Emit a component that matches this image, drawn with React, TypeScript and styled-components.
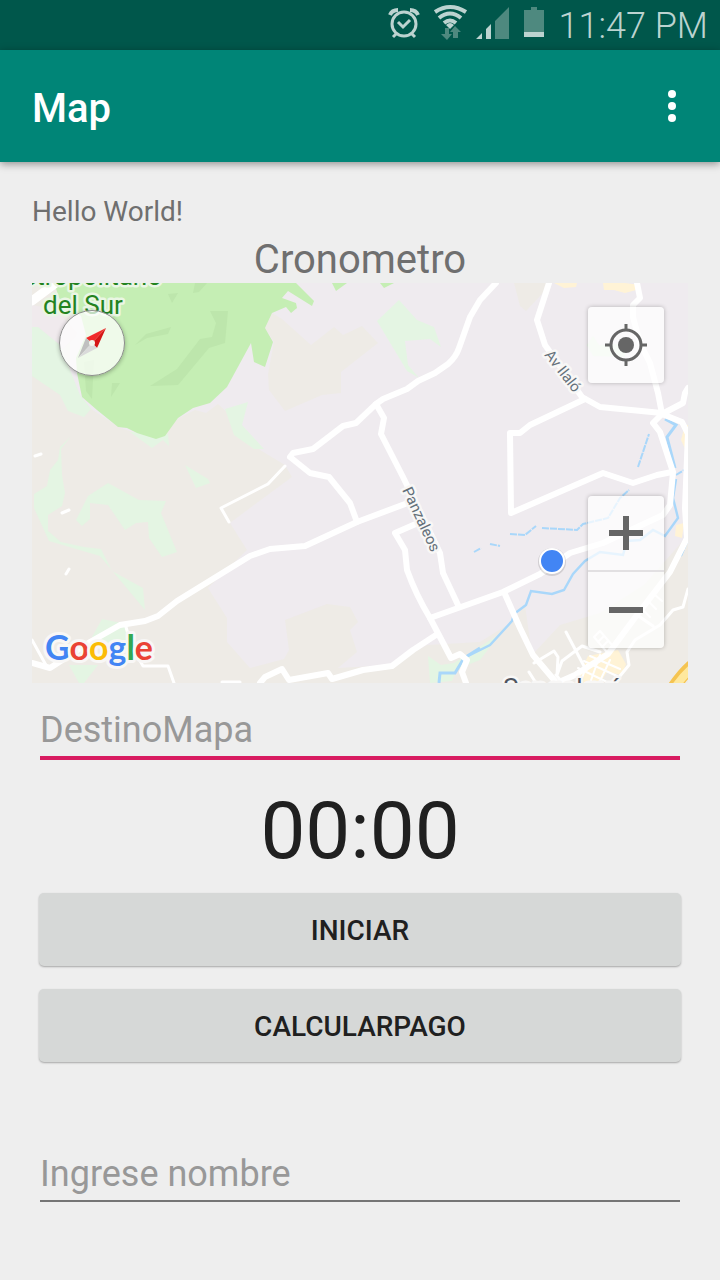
import React from "react";
import styled, { createGlobalStyle } from "styled-components";

const GlobalStyle = createGlobalStyle`
  * { box-sizing: border-box; }
  body {
    margin: 0;
    background: #eeeeee;
    font-family: Roboto, "Liberation Sans", sans-serif;
  }
  button, input { font-family: inherit; }
`;

const Screen = styled.div`
  display: flex;
  flex-direction: column;
  min-height: 100vh;
  background: #eeeeee;
`;

const StatusBar = styled.div`
  display: flex;
  align-items: center;
  justify-content: flex-end;
  height: 50px;
  padding-right: 12px;
  background: #00574b;
  color: #bcd3d0;
`;

const StatusIcons = styled.svg`
  width: 160px;
  height: 50px;
  margin-right: 11px;
`;

const Clock = styled.time`
  padding-top: 2px;
  font-size: 36px;
  font-weight: 300;
  line-height: 48px;
`;

const AppBar = styled.header`
  display: flex;
  align-items: center;
  justify-content: space-between;
  height: 112px;
  padding: 4px 32px 0;
  background: #008577;
  box-shadow: 0 2px 8px rgba(0, 0, 0, 0.4);
`;

const Title = styled.h1`
  margin: 0;
  color: #ffffff;
  font-size: 40px;
  font-weight: 500;
  line-height: 50px;
  padding-top: 2px;
`;

const MenuButton = styled.button`
  display: flex;
  padding: 0 12px 4px;
  border: 0;
  background: none;
`;

const Content = styled.main`
  display: flex;
  flex-direction: column;
  padding: 32px;
`;

const Greeting = styled.p`
  margin: 0 0 6px;
  color: #6f6f6f;
  font-size: 28px;
  line-height: 36px;
`;

const Heading = styled.h2`
  margin: 0;
  color: #6f6f6f;
  font-size: 40px;
  font-weight: 400;
  line-height: 47px;
  text-align: center;
`;

const MapFrame = styled.section`
  position: relative;
  height: 400px;
  overflow: hidden;
  background: #efebef;
`;

const MapDrawing = styled.svg`
  display: block;
  width: 100%;
  height: 100%;
`;

const MapButton = styled.button`
  display: flex;
  align-items: center;
  justify-content: center;
  width: 76px;
  height: 76px;
  padding: 0;
  border: 0;
  border-radius: 4px;
  background: rgba(255, 255, 255, 0.72);
`;

const CompassButton = styled(MapButton)`
  position: absolute;
  top: 27px;
  left: 27px;
  width: 66px;
  height: 66px;
  border: 1px solid #8d8d8d;
  border-radius: 50%;
  box-shadow: 0 1px 4px rgba(0, 0, 0, 0.3);
`;

const LocateButton = styled(MapButton)`
  position: absolute;
  top: 24px;
  right: 24px;
  box-shadow: 0 0 4px rgba(0, 0, 0, 0.25);
`;

const ZoomControls = styled.div`
  position: absolute;
  right: 24px;
  bottom: 35px;
  border-radius: 4px;
  box-shadow: 0 0 4px rgba(0, 0, 0, 0.25);
`;

const ZoomButton = styled(MapButton)<{ $divided?: boolean }>`
  border-radius: ${(p) => (p.$divided ? "4px 4px 0 0" : "0 0 4px 4px")};
  border-bottom: ${(p) => (p.$divided ? "2px solid #e2e0e2" : "0")};
`;

const TextField = styled.input<{ $active?: boolean }>`
  display: block;
  height: ${(p) => (p.$active ? "57px" : "54px")};
  margin: ${(p) => (p.$active ? "20px 8px 0" : "86px 8px 0")};
  padding: 0;
  border: 0;
  border-bottom: ${(p) => (p.$active ? "4px solid #d81b60" : "2px solid #757575")};
  border-radius: 0;
  outline: 0;
  background: none;
  color: #212121;
  font-size: 36px;
  &::placeholder { color: #989898; opacity: 1; }
`;

const Timer = styled.output`
  margin: 24px 0 14px;
  color: #202020;
  font-size: 80px;
  line-height: 95px;
  text-align: center;
`;

const Actions = styled.div`
  display: flex;
  flex-direction: column;
  gap: 23px;
  padding: 0 7px;
`;

const ActionButton = styled.button`
  height: 73px;
  padding: 2px 0 0;
  border: 0;
  border-radius: 5px;
  background: #d6d8d7;
  box-shadow: 0 1px 2px rgba(0, 0, 0, 0.3);
  color: #202020;
  font-size: 28px;
  font-weight: 500;
  text-transform: uppercase;
`;

const majorRoads = [
  "M496 283L480 300L470 317L459 348Q456 357 448 364L435 373L418 381L407 389L383 399L376 404L356 423L343 426L313 449L293 453L290 457L310 473L329 477L350 503L357 522",
  "M376 404L384 418L381 434L403 477L440 553L443 573L458 605",
  "M413 501L357 522L305 546L270 549L250 556L177 601L158 616L145 621L120 625L90 642L50 668L32 663",
  "M418 523L395 533L405 550L407 570Q416 595 430 618L451 658L460 654L467 660L462 672L466 683",
  "M430 618L503 592L540 574L570 553L603 543L663 515L670 505L673 472L660 432L653 423L662 414",
  "M260 683L265 677L282 669L289 680L328 673L332 679L363 670L392 666L413 650L436 635",
  "M549 283L537 320L545 345L582 397L600 407L662 413",
  "M585 399L530 425L520 433L510 433L511 513L603 473L633 483L657 475L672 472",
  "M662 414L658 393L650 363L640 343L633 317L633 305L640 298L637 283",
  "M662 414L683 403L685 393L688 388M662 414L682 422L688 434",
  "M504 592L520 628L533 655L555 681M688 433L685 508L687 538L670 572L637 615L608 654L575 675L557 683",
];

const minorRoads = [
  "M285 466L268 484L221 508L229 522",
  "M126 627L131 645L143 666L168 666L174 683M32 640L47 667",
  "M62 513L69 510M66 574L69 569M35 456L41 454M222 682H240",
  "M534 663L554 651L558 657L557 675L562 661L582 646L600 652M566 632L586 670M529 672L536 683M556 675L563 683",
  "M688 589L683 607L673 610L660 625L635 640L627 652L629 665L620 676M637 615L653 626",
];

const townStreets =
  "M584 661L617 676M578 668L609 683M590 656L620 669M587 665L580 683M600 655L590 683M610 660L599 683M643 610L650 617M649 602L656 609M655 595L662 601M594 637L600 631L612 645M594 637L606 651M598 642L604 636M602 647L608 641";

const Water = () => (
  <g fill="none" stroke="#a9d7fa" strokeWidth="2.4">
    <path strokeWidth="3" d="M439 683L440 673H455L464 658L480 648" />
    <path d="M464 658L490 645L512 621L514 614L526 605L531 591L552 594L564 590L573 574L585 561L600 552L623 555L627 541L640 540L653 530L665 536L678 518L673 498L676 479" />
    <path
      strokeWidth="2"
      strokeDasharray="7 1"
      d="M474 552L481 548M490 544L500 546M510 534L525 535L536 526M542 528L577 530L583 524L608 518L620 498L629 490M638 467L649 434M681 556L687 542M676 475L684 470"
    />
    <path strokeWidth="3" d="M665 419L676 425L667 437L675 468" />
  </g>
);

function MapCanvas() {
  return (
    <MapDrawing
      viewBox="32 283 656 400"
      preserveAspectRatio="xMidYMid slice"
      role="img"
      aria-label="Mapa"
    >
      <rect x="32" y="283" width="656" height="400" fill="#efebef" />
      <g fill="#eeebe6">
        <path d="M32 283H70V395L120 428L156 439L179 418L195 410L206 413L218 404L230 415L242 430L260 450L285 465L292 477L250 508L230 523L247 550L208 588L227 618L227 642L250 668L284 659L289 650L285 620L327 604L350 607L358 622L350 630L357 652L338 668L392 665L427 645L480 642L512 622L525 605L532 655L560 625L600 613L644 585L688 535V683H32Z" />
        <path d="M272 313L282 319L311 345L334 327L343 335L362 326L378 343L341 372V393L322 395L285 411L269 390L268 374L274 342L265 328ZM514 283H548L542 294L526 311L520 306Z" />
        <path d="M32 305L57 310L77 334L60 352L32 330Z" fill="#f0eaed" />
      </g>
      <g fill="#e4f5e3">
        <path d="M32 327L38 327L60 345L80 395L91 409L84 417L68 411L60 395L32 376Z" />
        <path d="M71 436L60 447L58 460L50 470L47 486L34 494V508L49 541L100 556L145 610L143 588L112 571L101 549L84 547L61 542L48 531L48 515L62 506L65 493L62 475L61 449Z" />
        <path d="M108 483L88 496L76 520L82 526L90 519V503L108 505L125 530L136 523L148 522L149 538L162 557L177 552L161 513L166 501L139 500Z" />
        <path d="M185 465L208 479L210 483L196 488ZM225 409L248 402L242 425L254 438L264 449H254L234 435ZM130 432L168 434L169 446L163 440L152 448Z" />
        <path d="M377 321L399 300L417 320L434 327L441 347L430 339L405 341L408 365L419 378L407 371ZM102 619L126 624L130 646H112L92 637ZM69 665H98L84 683H79ZM428 656L441 665L454 663L500 634L480 660L457 669L452 681L430 683Z" />
        <path d="M587 345L593 336L599 345L625 344V357L593 356Z" />
      </g>
      <path
        fill="#c5eeb4"
        d="M54 283L60 300L81 316L86 335L76 358L77 373L82 397L97 410L118 427L127 428L137 433L156 439L165 436L178 418L193 408L210 403L227 387L251 343L254 362L265 367L273 342L265 328L272 313L286 307L291 313L297 308L296 303L282 298L288 291L312 306L314 301L296 283ZM332 283L336 291L347 283ZM380 283L384 288L394 283Z"
      />
      <path
        fill="#bde6ac"
        d="M168 294L178 293L172 303ZM195 283L193 293L199 292L207 283ZM135 345L146 334L171 327L168 334L147 338ZM210 311H228L225 343L209 348L178 385L150 386L177 369L200 339L212 337L216 323ZM112 383H120L111 397ZM84 362L94 360L92 399L86 391Z"
      />
      <g fill="#fff3d6">
        <path d="M554 283H577L576 287L564 288ZM603 283H625L640 285L636 290L625 293L614 290L604 290ZM685 425H688V455L681 440ZM676 525L684 523L682 538L675 536Z" />
        <path d="M618 650L626 664L622 675L607 672L600 683H575L588 656Z" />
      </g>
      <Water />
      <g fill="none" stroke="#ffffff" strokeLinejoin="round" strokeLinecap="round">
        {majorRoads.map((d) => (
          <path key={d} d={d} strokeWidth="6" />
        ))}
        {minorRoads.map((d) => (
          <path key={d} d={d} strokeWidth="3" />
        ))}
        <path d={townStreets} strokeWidth="2" />
        <path d="M32 301L56 283" strokeWidth="9" />
      </g>
      <path d="M674 687Q682 675 692 666" stroke="#f5c451" strokeWidth="13" fill="none" />
      <path d="M676 686Q683 676 692 668" stroke="#ffe89d" strokeWidth="8" fill="none" />

      <g
        fontFamily='Roboto, "Liberation Sans", sans-serif'
        stroke="#f8f7f6"
        strokeWidth="5"
        strokeLinejoin="round"
        paintOrder="stroke"
      >
        <g fill="#23831f" fontSize="26" stroke="#eaf6e4">
          <text x="162" y="285" textAnchor="end">Metropolitano</text>
          <text x="43" y="314">del Sur</text>
        </g>
        <g fill="#64707a" fontSize="15">
          <text transform="translate(544 355) rotate(52)">Av Ilaló</text>
          <text transform="translate(402 490) rotate(65)">Panzaleos</text>
        </g>
        <text x="503" y="697" fill="#4e5560" fontSize="26">Sangolquí</text>
      </g>

      <text
        x="45"
        y="660"
        fontFamily="Lato, sans-serif"
        fontSize="34"
        fontWeight="700"
        stroke="#f8f7f6"
        strokeWidth="6"
        strokeLinejoin="round"
        paintOrder="stroke"
      >
        <tspan fill="#4285f4">G</tspan>
        <tspan fill="#ea4335">o</tspan>
        <tspan fill="#fbbc05">o</tspan>
        <tspan fill="#4285f4">g</tspan>
        <tspan fill="#34a853">l</tspan>
        <tspan fill="#ea4335">e</tspan>
      </text>

      <circle cx="552" cy="562" r="14" fill="#000000" opacity="0.12" />
      <circle cx="552" cy="561" r="12" fill="#4285f4" stroke="#ffffff" strokeWidth="2" />
    </MapDrawing>
  );
}

function StatusGlyphs() {
  return (
    <StatusIcons viewBox="387 0 160 50" aria-hidden="true">
      <g fill="none" stroke="#bcd3d0" strokeWidth="3">
        <circle cx="404" cy="24" r="12" />
        <path d="M398 22L403 27L410 20M397 33L393 37M411 33L415 37" />
        <path strokeWidth="4" d="M390 15Q392 10 398 10M418 15Q416 10 410 10" />
        <path strokeWidth="4" d="M435 12Q450 2 466 12M439 18Q450 9 461 18M444 23Q450 18 456 23" />
      </g>
      <path fill="#bcd3d0" d="M446 25Q450 21 454 25L450 29ZM476 39L482 33V39ZM486 39V29L491 24V39Z" />
      <path fill="#4e897f" d="M495 39V21L509 7V39ZM531 10V7H537V10H544V37H524V10Z" />
      <path fill="#4e897f" d="M445 28H449V34H452L447 40L441 34H445ZM453 38V32H450L455 26L461 32H458V38Z" />
      <path fill="#bcd3d0" d="M524 32H544V37H524Z" />
    </StatusIcons>
  );
}

export default function App() {
  return (
    <Screen>
      <GlobalStyle />
      <StatusBar>
        <StatusGlyphs />
        <Clock>11:47 PM</Clock>
      </StatusBar>
      <AppBar>
        <Title>Map</Title>
        <MenuButton type="button" aria-label="Más opciones">
          <svg width="8" height="32" viewBox="0 0 8 32" fill="#ffffff">
            <circle cx="4" cy="4" r="4" />
            <circle cx="4" cy="16" r="4" />
            <circle cx="4" cy="28" r="4" />
          </svg>
        </MenuButton>
      </AppBar>
      <Content>
        <Greeting>Hello World!</Greeting>
        <Heading>Cronometro</Heading>
        <MapFrame>
          <MapCanvas />
          <CompassButton type="button" aria-label="Orientar al norte">
            <svg width="30" height="30" viewBox="0 0 30 30">
              <path d="M29 0L9 10L15 15Z" fill="#f12b2b" />
              <path d="M29 0L20 20L15 15Z" fill="#d51616" />
              <path d="M1 30L9 10L15 15Z" fill="#c0c0c0" />
              <path d="M1 30L20 20L15 15Z" fill="#dadada" />
              <circle cx="15" cy="15" r="3" fill="#f1f5e9" />
            </svg>
          </CompassButton>
          <LocateButton type="button" aria-label="Mi ubicación">
            <svg width="42" height="42" viewBox="0 0 42 42" stroke="#666666" fill="none">
              <circle cx="21" cy="21" r="15" strokeWidth="3" />
              <circle cx="21" cy="21" r="8" fill="#666666" stroke="none" />
              <path d="M21 0V6M21 36V42M0 21H6M36 21H42" strokeWidth="3" />
            </svg>
          </LocateButton>
          <ZoomControls>
            <ZoomButton type="button" aria-label="Acercar" $divided>
              <svg width="34" height="34" viewBox="0 0 34 34" fill="#666666">
                <path d="M14 0H20V14H34V20H20V34H14V20H0V14H14Z" />
              </svg>
            </ZoomButton>
            <ZoomButton type="button" aria-label="Alejar">
              <svg width="34" height="6" viewBox="0 0 34 6" fill="#666666">
                <path d="M0 0H34V6H0Z" />
              </svg>
            </ZoomButton>
          </ZoomControls>
        </MapFrame>
        <TextField $active type="text" placeholder="DestinoMapa" aria-label="DestinoMapa" />
        <Timer>00:00</Timer>
        <Actions>
          <ActionButton type="button">Iniciar</ActionButton>
          <ActionButton type="button">CalcularPago</ActionButton>
        </Actions>
        <TextField type="text" placeholder="Ingrese nombre" aria-label="Ingrese nombre" />
      </Content>
    </Screen>
  );
}
